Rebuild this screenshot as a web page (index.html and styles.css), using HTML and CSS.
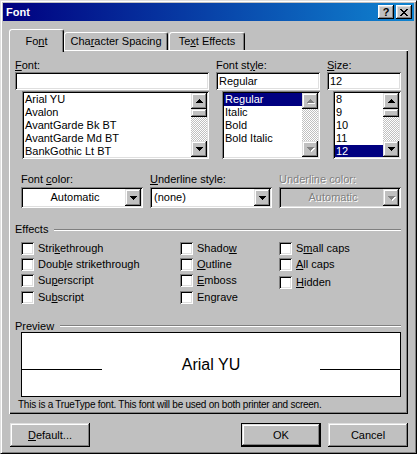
FILE: index.html
```html
<!DOCTYPE html>
<html lang="en">

<head>
    <meta charset="UTF-8">
    <meta name="viewport" content="width=device-width, initial-scale=1.0">
    <link rel="stylesheet" href="styles.css">
    <title>Font</title>
</head>

<body>
    <div class="window">
        <!-- Title bar -->
        <div class="titlebar">
            <span class="title">Font</span>
            <div class="caption-buttons">
                <button class="cap-btn">?</button>
                <button class="cap-btn">
                    <svg width="8" height="7" viewBox="0 0 8 7" shape-rendering="crispEdges">
                        <path d="M0 0h2v1h-2z M6 0h2v1h-2z M1 1h2v1h-2z M5 1h2v1h-2z M2 2h4v1h-4z M3 3h2v1h-2z M2 4h4v1h-4z M1 5h2v1h-2z M5 5h2v1h-2z M0 6h2v1h-2z M6 6h2v1h-2z" fill="#000"/>
                    </svg>
                </button>
            </div>
        </div>

        <div class="dialog">
            <!-- Tabs -->
            <div class="tabs">
                <div class="tab active">Fo<u>n</u>t</div>
                <div class="tab spacing">Cha<u>r</u>acter Spacing</div>
                <div class="tab effects">Te<u>x</u>t Effects</div>
            </div>

            <div class="panel">
                <!-- Font / style / size -->
                <div class="font-row">
                    <div>
                        <div class="label"><u>F</u>ont:</div>
                        <div class="textbox"></div>
                        <div class="listbox font-list">
                            <ul class="items">
                                <li>Arial YU</li>
                                <li>Avalon</li>
                                <li>AvantGarde Bk BT</li>
                                <li>AvantGarde Md BT</li>
                                <li>BankGothic Lt BT</li>
                            </ul>
                            <div class="scrollbar">
                                <div class="sb-btn"><svg width="7" height="4" shape-rendering="crispEdges"><path d="M3 0h1v1h-1z M2 1h3v1h-3z M1 2h5v1h-5z M0 3h7v1h-7z"/></svg></div>
                                <div class="sb-thumb"></div>
                                <div class="sb-track"></div>
                                <div class="sb-btn"><svg width="7" height="4" shape-rendering="crispEdges"><path d="M0 0h7v1h-7z M1 1h5v1h-5z M2 2h3v1h-3z M3 3h1v1h-1z"/></svg></div>
                            </div>
                        </div>
                    </div>
                    <div>
                        <div class="label">Font st<u>y</u>le:</div>
                        <div class="textbox">Regular</div>
                        <div class="listbox style-list">
                            <ul class="items">
                                <li class="sel">Regular</li>
                                <li>Italic</li>
                                <li>Bold</li>
                                <li>Bold Italic</li>
                            </ul>
                            <div class="scrollbar">
                                <div class="sb-btn disabled"><svg width="8" height="5" shape-rendering="crispEdges"><path class="hl" d="M4 1h1v1h-1z M3 2h3v1h-3z M2 3h5v1h-5z M1 4h7v1h-7z"/><path d="M3 0h1v1h-1z M2 1h3v1h-3z M1 2h5v1h-5z M0 3h7v1h-7z"/></svg></div>
                                <div class="sb-track"></div>
                                <div class="sb-btn disabled"><svg width="8" height="5" shape-rendering="crispEdges"><path class="hl" d="M1 1h7v1h-7z M2 2h5v1h-5z M3 3h3v1h-3z M4 4h1v1h-1z"/><path d="M0 0h7v1h-7z M1 1h5v1h-5z M2 2h3v1h-3z M3 3h1v1h-1z"/></svg></div>
                            </div>
                        </div>
                    </div>
                    <div>
                        <div class="label"><u>S</u>ize:</div>
                        <div class="textbox">12</div>
                        <div class="listbox size-list">
                            <ul class="items">
                                <li>8</li>
                                <li>9</li>
                                <li>10</li>
                                <li>11</li>
                                <li class="sel">12</li>
                            </ul>
                            <div class="scrollbar">
                                <div class="sb-btn"><svg width="7" height="4" shape-rendering="crispEdges"><path d="M3 0h1v1h-1z M2 1h3v1h-3z M1 2h5v1h-5z M0 3h7v1h-7z"/></svg></div>
                                <div class="sb-thumb"></div>
                                <div class="sb-track"></div>
                                <div class="sb-btn"><svg width="7" height="4" shape-rendering="crispEdges"><path d="M0 0h7v1h-7z M1 1h5v1h-5z M2 2h3v1h-3z M3 3h1v1h-1z"/></svg></div>
                            </div>
                        </div>
                    </div>
                </div>

                <!-- Colour / underline -->
                <div class="format-row">
                    <div>
                        <div class="label">Font <u>c</u>olor:</div>
                        <div class="combo">
                            <div class="combo-text centered">Automatic</div>
                            <div class="combo-btn"><svg width="7" height="4" shape-rendering="crispEdges"><path d="M0 0h7v1h-7z M1 1h5v1h-5z M2 2h3v1h-3z M3 3h1v1h-1z"/></svg></div>
                        </div>
                    </div>
                    <div>
                        <div class="label"><u>U</u>nderline style:</div>
                        <div class="combo">
                            <div class="combo-text">(none)</div>
                            <div class="combo-btn"><svg width="7" height="4" shape-rendering="crispEdges"><path d="M0 0h7v1h-7z M1 1h5v1h-5z M2 2h3v1h-3z M3 3h1v1h-1z"/></svg></div>
                        </div>
                    </div>
                    <div>
                        <div class="label disabled-text">Underline color:</div>
                        <div class="combo disabled">
                            <div class="combo-text centered disabled-text">Automatic</div>
                            <div class="combo-btn disabled"><svg width="8" height="5" shape-rendering="crispEdges"><path class="hl" d="M1 1h7v1h-7z M2 2h5v1h-5z M3 3h3v1h-3z M4 4h1v1h-1z"/><path d="M0 0h7v1h-7z M1 1h5v1h-5z M2 2h3v1h-3z M3 3h1v1h-1z"/></svg></div>
                        </div>
                    </div>
                </div>

                <!-- Effects -->
                <div class="group-head effects-head">Effects</div>
                <div class="checks">
                    <div class="check-col">
                        <div class="check"><span class="box"></span>Stri<u>k</u>ethrough</div>
                        <div class="check"><span class="box"></span>Doub<u>l</u>e strikethrough</div>
                        <div class="check"><span class="box"></span>Su<u>p</u>erscript</div>
                        <div class="check low"><span class="box"></span>Su<u>b</u>script</div>
                    </div>
                    <div class="check-col">
                        <div class="check"><span class="box"></span>Shado<u>w</u></div>
                        <div class="check"><span class="box"></span><u>O</u>utline</div>
                        <div class="check"><span class="box"></span><u>E</u>mboss</div>
                        <div class="check low"><span class="box"></span>En<u>g</u>rave</div>
                    </div>
                    <div class="check-col">
                        <div class="check"><span class="box"></span>S<u>m</u>all caps</div>
                        <div class="check"><span class="box"></span><u>A</u>ll caps</div>
                        <div class="check nudge"><span class="box"></span><u>H</u>idden</div>
                    </div>
                </div>

                <!-- Preview -->
                <div class="group-head preview-head">Preview</div>
                <div class="preview">
                    <span class="rule"></span>
                    <span class="sample">Arial YU</span>
                    <span class="rule"></span>
                </div>
                <div class="note">This is a TrueType font. This font will be used on both printer and screen.</div>
            </div>

            <!-- Dialog buttons -->
            <div class="buttons">
                <button class="btn default-btn"><u>D</u>efault...</button>
                <button class="btn ok">OK</button>
                <button class="btn cancel">Cancel</button>
            </div>
        </div>
    </div>
</body>
</html>
```

FILE: styles.css
```css
* {
    box-sizing: border-box;
}

body {
    margin: 0;
    background-color: #c0c0c0;
    font-family: "Liberation Sans", Arial, sans-serif;
    font-size: 11px;
    line-height: 13px;
    color: #000;
}

u {
    text-decoration-thickness: 1px;
}

.window {
    width: 417px;
    height: 454px;
    display: flex;
    flex-direction: column;
    padding: 2px;
    background-color: #c0c0c0;
    border: 1px solid;
    border-color: #dfdfdf #000 #000 #dfdfdf;
    box-shadow: inset 1px 1px #fff, inset -1px -1px #808080;
}

/* title bar */
.titlebar {
    height: 18px;
    display: flex;
    align-items: center;
    justify-content: space-between;
    padding: 0 2px 0 3px;
    background: linear-gradient(to right, #000080, #1084d0);
}

.title {
    color: #fff;
    font-weight: bold;
}

.caption-buttons {
    display: flex;
    gap: 2px;
}

.cap-btn {
    width: 16px;
    height: 14px;
    padding: 0;
    border: none;
    display: flex;
    align-items: center;
    justify-content: center;
    font: bold 11px "Liberation Sans", Arial, sans-serif;
    background-color: #c0c0c0;
    box-shadow: inset -1px -1px #000, inset 1px 1px #fff, inset -2px -2px #808080, inset 2px 2px #dfdfdf;
}

/* dialog body */
.dialog {
    flex: 1;
    display: flex;
    flex-direction: column;
    padding: 8px 6px 0 6px;
}

.tabs {
    height: 21px;
    display: flex;
    align-items: flex-end;
}

.tab {
    height: 18px;
    padding-top: 2px;
    text-align: center;
    background-color: #c0c0c0;
    border: 1px solid;
    border-bottom: none;
    border-color: #fff #000 transparent #fff;
    border-radius: 3px 3px 0 0;
    box-shadow: inset -1px 0 #808080;
}

.tab.active {
    width: 55px;
    height: 23px;
    padding-top: 5px;
    margin-bottom: -2px;
    position: relative;
    z-index: 1;
}

.tab.spacing {
    width: 104px;
}

.tab.effects {
    width: 76px;
    margin-left: 1px;
}

.panel {
    height: 364px;
    padding: 9px 7px 3px 6px;
    background-color: #c0c0c0;
    box-shadow: inset 1px 1px #fff, inset -1px -1px #000, inset -2px -2px #808080;
}

.label {
    height: 13px;
    white-space: nowrap;
}

.disabled-text {
    color: #808080;
    text-shadow: 1px 1px 0 #fff;
}

/* sunken fields */
.textbox,
.listbox,
.combo,
.box {
    background-color: #fff;
    box-shadow: inset 1px 1px #808080, inset -1px -1px #fff, inset 2px 2px #000, inset -2px -2px #dfdfdf;
}

.font-row {
    display: grid;
    grid-template-columns: 194px 104px 74px;
    column-gap: 7px;
}

.textbox {
    height: 18px;
    padding: 3px 3px 0 3px;
}

.listbox {
    height: 68px;
    margin-top: 1px;
    padding: 2px;
    display: flex;
}

.font-list {
    margin-left: 7px;
}

.style-list,
.size-list {
    margin-left: 6px;
}

.items {
    flex: 1;
    margin: 0;
    padding: 0;
    list-style: none;
    overflow: hidden;
}

.items li {
    height: 13px;
    padding-left: 1px;
    white-space: nowrap;
}

.items li.sel {
    background-color: #000080;
    color: #fff;
}

.scrollbar {
    width: 16px;
    display: flex;
    flex-direction: column;
}

.sb-btn,
.sb-thumb,
.combo-btn,
.btn {
    background-color: #c0c0c0;
    box-shadow: inset -1px -1px #000, inset 1px 1px #dfdfdf, inset -2px -2px #808080, inset 2px 2px #fff;
}

.sb-btn {
    height: 16px;
    display: flex;
    align-items: center;
    justify-content: center;
}

.sb-thumb {
    height: 8px;
}

.sb-track {
    flex: 1;
    background: repeating-conic-gradient(#c0c0c0 0% 25%, #fff 0% 50%) 0 0 / 2px 2px;
}

svg path {
    fill: #000;
}

.disabled svg path {
    fill: #808080;
}

.disabled svg path.hl {
    fill: #fff;
}

.disabled svg {
    margin: 1px 0 0 1px;
}

/* colour and underline combos */
.format-row {
    display: grid;
    grid-template-columns: 122px 122px 122px;
    column-gap: 7px;
    margin: 14px 0 0 6px;
}

.format-row .label {
    margin-bottom: 1px;
}

.combo {
    height: 21px;
    padding: 2px;
    display: flex;
    align-items: center;
}

.combo.disabled {
    background-color: #c0c0c0;
}

.combo-text {
    flex: 1;
    padding-left: 2px;
    white-space: nowrap;
}

.combo-text.centered {
    text-align: center;
}

.combo-btn {
    width: 16px;
    height: 17px;
    display: flex;
    align-items: center;
    justify-content: center;
}

/* group headers */
.group-head {
    display: flex;
    align-items: center;
    height: 13px;
}

.group-head::after {
    content: "";
    flex: 1;
    margin-left: 6px;
    border-top: 1px solid #808080;
    border-bottom: 1px solid #fff;
}

.effects-head {
    margin-top: 15px;
}

.preview-head {
    height: 12px;
    line-height: 12px;
    margin-top: 16px;
}

/* effects checkboxes */
.checks {
    display: grid;
    grid-template-columns: 159px 99px 1fr;
    margin: 4px 0 0 6px;
    height: 64px;
}

.check {
    height: 16px;
    display: flex;
    align-items: center;
    white-space: nowrap;
}

.check.low {
    margin-top: 1px;
}

.check.nudge {
    margin-top: 2px;
}

.box {
    width: 13px;
    height: 13px;
    margin-right: 4px;
}

/* preview */
.preview {
    height: 65px;
    margin-left: 6px;
    display: flex;
    align-items: center;
    justify-content: space-between;
    background-color: #fff;
    border: 1px solid #000;
}

.rule {
    width: 80px;
    height: 1px;
    margin-top: 9px;
    background-color: #000;
}

.sample {
    font-size: 16px;
    line-height: 18px;
}

.note {
    margin-top: 1px;
    padding-left: 3px;
    font-size: 10px;
    letter-spacing: -0.25px;
    white-space: nowrap;
}

/* dialog buttons */
.buttons {
    display: flex;
    margin-top: 9px;
}

.btn {
    width: 80px;
    height: 24px;
    padding: 0;
    border: none;
    font: 11px "Liberation Sans", Arial, sans-serif;
    color: #000;
}

.default-btn {
    margin-left: 1px;
}

.ok {
    margin-left: auto;
    border: 1px solid #000;
}

.cancel {
    margin-left: 7px;
}
```
